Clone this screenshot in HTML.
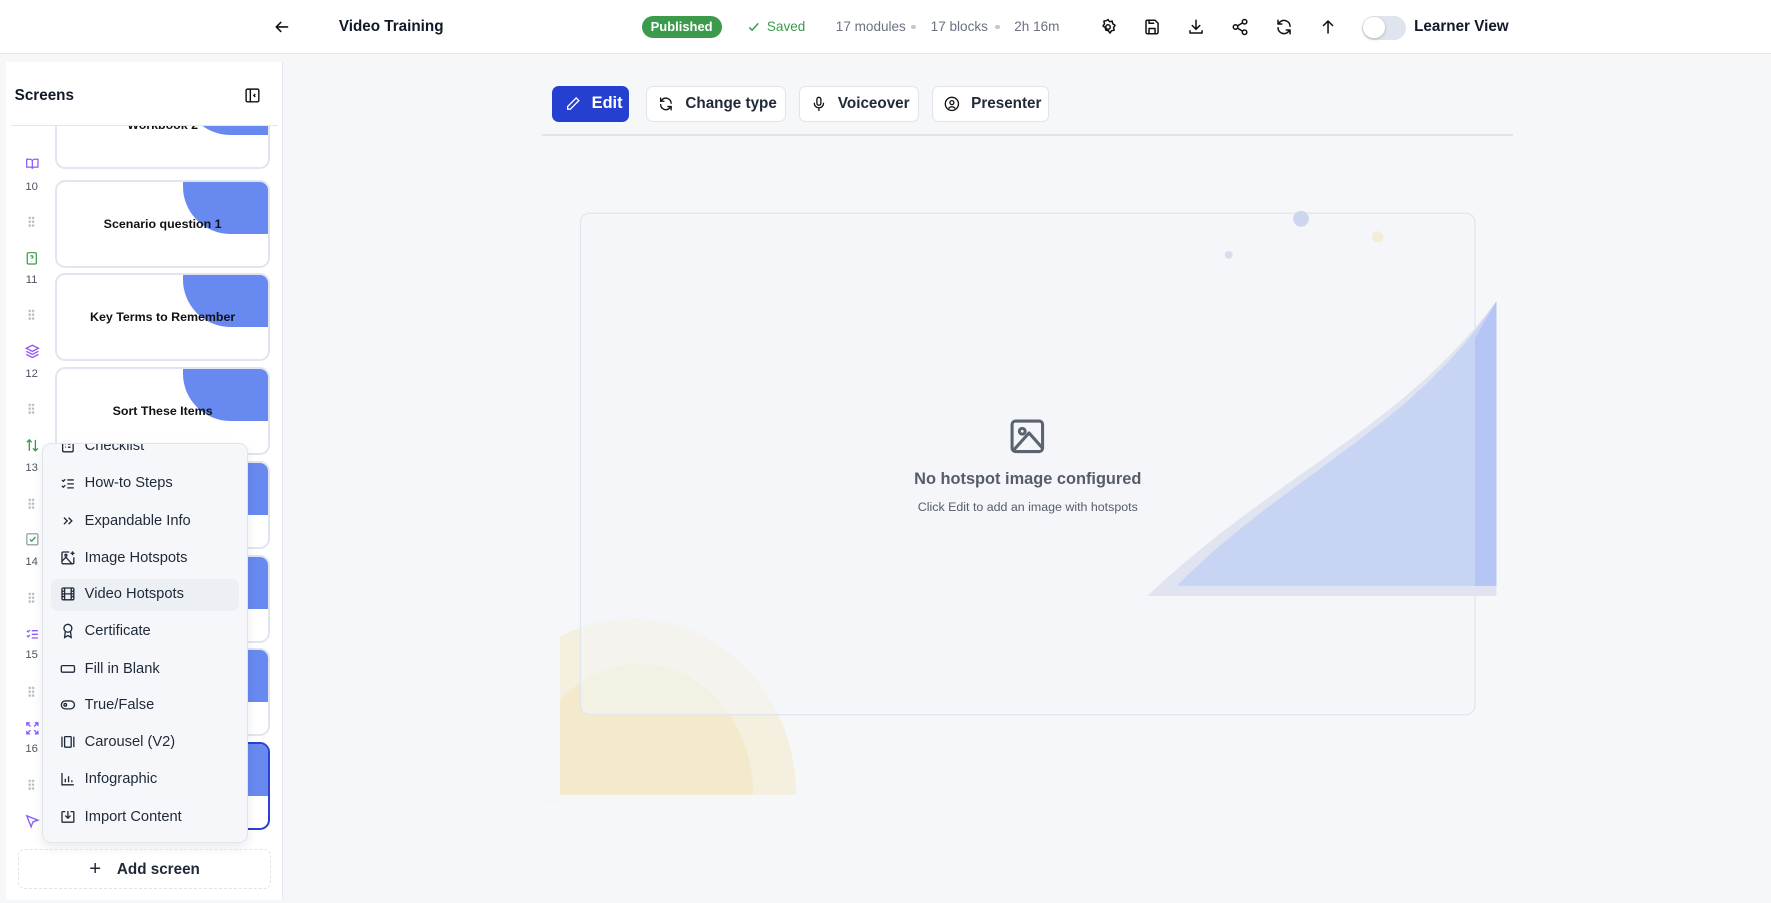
<!DOCTYPE html>
<html><head><meta charset="utf-8"><style>
*{box-sizing:border-box;margin:0;padding:0}
html,body{width:1771px;height:903px;overflow:hidden;background:#f6f7f9}
#w{zoom:1.12946;width:1568px;height:799px;overflow:hidden;position:relative;font-family:"Liberation Sans",sans-serif;color:#111827;background:#f6f7f9}
.a{position:absolute}
svg{display:block}
.top{left:0;top:0;width:1568px;height:48px;background:#fff;border-bottom:1px solid #e3e6ec}
.meta{font-size:12px;color:#6b7280;top:17px}
.dot{width:4px;height:4px;border-radius:2px;background:#c4c8d0;top:22px}
.ic{top:16px}
.btn{top:76px;height:32px;border:1px solid #e1e5eb;border-radius:6px;background:#fff;font-size:13.5px;font-weight:bold;display:flex;align-items:center;gap:10px;padding-left:10px;color:#1f2937}
.card{left:49px;width:190px;height:78px;background:#fff;border:2px solid #e0e5ef;border-radius:9px;overflow:hidden}
.card .bl{position:absolute;right:0;top:0;width:75px;height:46px;background:#6889f0;border-bottom-left-radius:42px}
.card .t{position:absolute;left:0;right:0;top:31px;text-align:center;font-size:11px;font-weight:bold;color:#111}
.num{left:18px;width:20px;text-align:center;font-size:10px;color:#4b5563}
.hd{left:25px;width:6px;height:10px;background:radial-gradient(circle,#b8bec8 1px,transparent 1.3px) 0 0/3px 3.4px}
.mi{left:53px;font-size:13px;color:#1f2937;display:flex;align-items:center;gap:8px;height:20px}
</style></head><body><div id="w">
<div class="a top"></div>
<svg class="a" style="left:243px;top:17px" width="14" height="14" viewBox="0 0 14 14" fill="none" stroke="#111" stroke-width="1.4" stroke-linecap="round" stroke-linejoin="round"><path d="M12 7H2M6 3L2 7l4 4"/></svg>
<div class="a" style="left:300px;top:16px;font-size:13.5px;font-weight:bold">Video Training</div>
<div class="a" style="left:568px;top:14px;width:71px;height:20px;border-radius:10px;background:#3b9a4c;color:#fff;font-size:11.5px;font-weight:bold;text-align:center;line-height:20px">Published</div>
<svg class="a" style="left:661px;top:18px" width="12" height="12" viewBox="0 0 12 12" fill="none" stroke="#3b9a4c" stroke-width="1.3"><path d="M2 6.5l2.5 2.5L10 3"/></svg>
<div class="a meta" style="left:679px;color:#3b9a4c">Saved</div>
<div class="a meta" style="left:740px">17 modules</div>
<div class="a dot" style="left:807px"></div>
<div class="a meta" style="left:824px">17 blocks</div>
<div class="a dot" style="left:881px"></div>
<div class="a meta" style="left:898px">2h 16m</div>
<svg class="a ic" style="left:973px" width="16" height="16" viewBox="0 0 24 24" fill="none" stroke="#111" stroke-width="2"><circle cx="12" cy="12" r="3"/><path d="M12 2l2 3 3.5-.8.8 3.5 3 2-2 3 .8 3.5-3.5.8-2 3-2-3-3.5-.8-.8-3.5-3-2 2-3-.8-3.5 3.5-.8z" stroke-linejoin="round"/></svg>
<svg class="a ic" style="left:1012px" width="16" height="16" viewBox="0 0 24 24" fill="none" stroke="#111" stroke-width="2" stroke-linejoin="round"><path d="M5 3h11l4 4v12a2 2 0 0 1-2 2H6a2 2 0 0 1-2-2V5a2 2 0 0 1 1-2z"/><path d="M8 21v-7h8v7M8 3v4h7"/></svg>
<svg class="a ic" style="left:1051px" width="16" height="16" viewBox="0 0 24 24" fill="none" stroke="#111" stroke-width="2" stroke-linecap="round" stroke-linejoin="round"><path d="M12 3v12M7 10l5 5 5-5M4 17v3h16v-3"/></svg>
<svg class="a ic" style="left:1090px" width="16" height="16" viewBox="0 0 24 24" fill="none" stroke="#111" stroke-width="2"><circle cx="18" cy="5" r="3"/><circle cx="6" cy="12" r="3"/><circle cx="18" cy="19" r="3"/><path d="M8.6 13.5l6.8 4M15.4 6.5l-6.8 4"/></svg>
<svg class="a ic" style="left:1129px" width="16" height="16" viewBox="0 0 24 24" fill="none" stroke="#111" stroke-width="2" stroke-linecap="round" stroke-linejoin="round"><path d="M20 11A8 8 0 0 0 6 6l-2 2M4 3v5h5M4 13a8 8 0 0 0 14 5l2-2M20 21v-5h-5"/></svg>
<svg class="a ic" style="left:1168px" width="16" height="16" viewBox="0 0 24 24" fill="none" stroke="#111" stroke-width="2" stroke-linecap="round" stroke-linejoin="round"><path d="M12 20V4M6 10l6-6 6 6"/></svg>
<div class="a" style="left:1206px;top:14px;width:39px;height:21px;border-radius:11px;background:#dfe4ee"></div>
<div class="a" style="left:1207px;top:15px;width:19px;height:19px;border-radius:10px;background:#fff;box-shadow:0 1px 3px rgba(0,0,0,.2)"></div>
<div class="a" style="left:1252px;top:16px;font-size:13.5px;font-weight:bold">Learner View</div>

<!-- sidebar -->
<div class="a" style="left:5px;top:55px;width:246px;height:742px;background:#fff;border-right:1px solid #e6e9ef"></div>
<div class="a" style="left:13px;top:77px;font-size:13.5px;font-weight:bold">Screens</div>
<svg class="a" style="left:216px;top:77px" width="15" height="15" viewBox="0 0 24 24" fill="none" stroke="#111" stroke-width="2"><rect x="3" y="3" width="18" height="18" rx="2"/><path d="M9 3v18M16 10l-2 2 2 2"/></svg>
<div class="a" style="left:10px;top:111px;width:236px;height:1px;background:#e3e6ec"></div>
<div class="a" style="left:5px;top:112px;width:246px;height:640px;overflow:hidden">
 <div class="a card" style="left:44px;top:-40px"><div class="bl"></div><div class="t">Workbook 2</div></div>
 <div class="a card" style="left:44px;top:47px"><div class="bl"></div><div class="t">Scenario question 1</div></div>
 <div class="a card" style="left:44px;top:130px"><div class="bl"></div><div class="t">Key Terms to Remember</div></div>
 <div class="a card" style="left:44px;top:213px"><div class="bl"></div><div class="t">Sort These Items</div></div>
 <div class="a card" style="left:44px;top:296px"><div class="bl"></div></div>
 <div class="a card" style="left:44px;top:379px"><div class="bl"></div></div>
 <div class="a card" style="left:44px;top:462px"><div class="bl"></div></div>
 <div class="a card" style="left:44px;top:545px;border-color:#2c3fd6"><div class="bl"></div></div>
</div>
<!-- left column -->
<svg class="a" style="left:22px;top:139px" width="13" height="12" viewBox="0 0 24 24" fill="none" stroke="#8b5cf6" stroke-width="2.2"><path d="M2 4h6a4 4 0 0 1 4 4v13a3 3 0 0 0-3-3H2zM22 4h-6a4 4 0 0 0-4 4v13a3 3 0 0 1 3-3h7z"/></svg>
<svg class="a" style="left:22px;top:222px" width="12" height="13" viewBox="0 0 24 24" fill="none" stroke="#3b9a4c" stroke-width="2.2"><rect x="4" y="2" width="16" height="20" rx="2"/><path d="M10 9a2 2 0 1 1 3 2c-1 .5-1 1-1 2M12 17v.5"/></svg>
<svg class="a" style="left:22px;top:305px" width="13" height="13" viewBox="0 0 24 24" fill="none" stroke="#8b5cf6" stroke-width="2.2"><path d="M12 2l10 5-10 5L2 7zM2 12l10 5 10-5M2 17l10 5 10-5"/></svg>
<svg class="a" style="left:22px;top:388px" width="13" height="13" viewBox="0 0 24 24" fill="none" stroke="#3b9a4c" stroke-width="2.2"><path d="M7 21V3M3 7l4-4 4 4M17 3v18M13 17l4 4 4-4"/></svg>
<svg class="a" style="left:22px;top:471px" width="13" height="13" viewBox="0 0 24 24" fill="none" stroke="#3b9a4c" stroke-width="2.2"><rect x="3" y="3" width="18" height="18" rx="2" stroke="#9ca3af"/><path d="M8 12l3 3 6-7"/></svg>
<svg class="a" style="left:22px;top:555px" width="13" height="13" viewBox="0 0 24 24" fill="none" stroke="#8b5cf6" stroke-width="2.2"><path d="M3 6l2 2 3-3M3 14l2 2 3-3M11 6h10M11 12h10M11 18h10"/></svg>
<svg class="a" style="left:22px;top:638px" width="13" height="13" viewBox="0 0 24 24" fill="none" stroke="#8b5cf6" stroke-width="2.2"><path d="M3 8V3h5M21 8V3h-5M3 16v5h5M21 16v5h-5M3 3l6 6M21 3l-6 6M3 21l6-6M21 21l-6-6"/></svg>
<svg class="a" style="left:22px;top:721px" width="13" height="13" viewBox="0 0 24 24" fill="none" stroke="#8b5cf6" stroke-width="2.2"><path d="M3 3l7 18 3-8 8-3z"/></svg>
<div class="a num" style="top:160px">10</div><div class="a num" style="top:243px">11</div><div class="a num" style="top:326px">12</div><div class="a num" style="top:409px">13</div><div class="a num" style="top:492px">14</div><div class="a num" style="top:575px">15</div><div class="a num" style="top:658px">16</div>
<div class="a hd" style="top:191px"></div><div class="a hd" style="top:274px"></div><div class="a hd" style="top:357px"></div><div class="a hd" style="top:441px"></div><div class="a hd" style="top:524px"></div><div class="a hd" style="top:607px"></div><div class="a hd" style="top:690px"></div>

<!-- dropdown -->
<div class="a" style="left:37px;top:392px;width:183px;height:354px;background:#f5f7fa;border:1px solid #e1e5ec;border-radius:8px;box-shadow:0 4px 10px rgba(0,0,0,.08);overflow:hidden">
 <div class="a" style="left:7px;top:120px;width:167px;height:28px;border-radius:6px;background:#eceff4"></div>
</div>
<div class="a" style="left:37px;top:393px;width:183px;height:353px;overflow:hidden">
<div class="a" style="left:0;top:-1px;width:183px;height:354px">
<div class="a mi" style="left:16px;top:-7px"><svg width="14" height="14" viewBox="0 0 24 24" fill="none" stroke="#1f2937" stroke-width="2"><rect x="4" y="3" width="16" height="18" rx="2"/><path d="M8 9h1M12 9h4M8 14h1M12 14h4"/></svg>Checklist</div>
<div class="a mi" style="left:16px;top:26px"><svg width="14" height="14" viewBox="0 0 24 24" fill="none" stroke="#1f2937" stroke-width="2"><path d="M3 6l2 2 3-3M3 15l2 2 3-3M11 6h10M11 12h10M11 18h10"/></svg>How-to Steps</div>
<div class="a mi" style="left:16px;top:59px"><svg width="14" height="14" viewBox="0 0 24 24" fill="none" stroke="#1f2937" stroke-width="2"><path d="M6 7l5 5-5 5M13 7l5 5-5 5"/></svg>Expandable Info</div>
<div class="a mi" style="left:16px;top:92px"><svg width="14" height="14" viewBox="0 0 24 24" fill="none" stroke="#1f2937" stroke-width="2"><path d="M14 3H5a2 2 0 0 0-2 2v14a2 2 0 0 0 2 2h14a2 2 0 0 0 2-2v-8M3 17l6-6 9 10M19 2v6M16 5h6"/><circle cx="9" cy="8" r="1.5"/></svg>Image Hotspots</div>
<div class="a mi" style="left:16px;top:124px"><svg width="14" height="14" viewBox="0 0 24 24" fill="none" stroke="#1f2937" stroke-width="2"><rect x="3" y="3" width="18" height="18" rx="2"/><path d="M7 3v18M17 3v18M3 8h4M3 12h18M3 16h4M17 8h4M17 16h4"/></svg>Video Hotspots</div>
<div class="a mi" style="left:16px;top:157px"><svg width="14" height="14" viewBox="0 0 24 24" fill="none" stroke="#1f2937" stroke-width="2"><circle cx="12" cy="8" r="6"/><path d="M8 13l-1 9 5-3 5 3-1-9"/></svg>Certificate</div>
<div class="a mi" style="left:16px;top:190px"><svg width="14" height="14" viewBox="0 0 24 24" fill="none" stroke="#1f2937" stroke-width="2"><rect x="2" y="7" width="20" height="10" rx="2"/><path d="M7 12h.01M12 12h.01M17 12h.01"/></svg>Fill in Blank</div>
<div class="a mi" style="left:16px;top:222px"><svg width="14" height="14" viewBox="0 0 24 24" fill="none" stroke="#1f2937" stroke-width="2"><rect x="2" y="6" width="20" height="12" rx="6"/><circle cx="8" cy="12" r="2"/></svg>True/False</div>
<div class="a mi" style="left:16px;top:255px"><svg width="14" height="14" viewBox="0 0 24 24" fill="none" stroke="#1f2937" stroke-width="2"><rect x="7" y="4" width="10" height="16" rx="1"/><path d="M3 4v16M21 4v16"/></svg>Carousel (V2)</div>
<div class="a mi" style="left:16px;top:288px"><svg width="14" height="14" viewBox="0 0 24 24" fill="none" stroke="#1f2937" stroke-width="2"><path d="M3 3v18h18M8 17v-5M13 17V8M18 17v-3"/></svg>Infographic</div>
<div class="a mi" style="left:16px;top:321px"><svg width="14" height="14" viewBox="0 0 24 24" fill="none" stroke="#1f2937" stroke-width="2"><path d="M8 4H4a1 1 0 0 0-1 1v14a1 1 0 0 0 1 1h16a1 1 0 0 0 1-1V5a1 1 0 0 0-1-1h-4M12 3v11M8 10l4 4 4-4"/></svg>Import Content</div>
</div></div>
<div class="a" style="left:16px;top:752px;width:224px;height:35px;border:1px dashed #dfe3ea;border-radius:6px;display:flex;align-items:center;justify-content:center;gap:14px;font-size:13.5px;font-weight:bold;color:#1f2937"><span style="font-size:18px;font-weight:normal">+</span>Add screen</div>

<!-- main -->
<div class="a btn" style="left:489px;width:68px;background:#2540d0;border-color:#2540d0;color:#fff;font-size:14.5px"><svg width="14" height="14" viewBox="0 0 24 24" fill="none" stroke="#fff" stroke-width="2"><path d="M17 3l4 4L8 20H4v-4z"/></svg>Edit</div>
<div class="a btn" style="left:572px;width:124px"><svg width="14" height="14" viewBox="0 0 24 24" fill="none" stroke="#111" stroke-width="2" stroke-linecap="round"><path d="M20 11A8 8 0 0 0 6 6l-2 2M4 3v5h5M4 13a8 8 0 0 0 14 5l2-2M20 21v-5h-5"/></svg>Change type</div>
<div class="a btn" style="left:707px;width:107px"><svg width="14" height="14" viewBox="0 0 24 24" fill="none" stroke="#111" stroke-width="2" stroke-linecap="round"><rect x="9" y="2" width="6" height="12" rx="3"/><path d="M5 11a7 7 0 0 0 14 0M12 18v4"/></svg>Voiceover</div>
<div class="a btn" style="left:825px;width:104px"><svg width="14" height="14" viewBox="0 0 24 24" fill="none" stroke="#111" stroke-width="2"><circle cx="12" cy="12" r="10"/><circle cx="12" cy="10" r="3"/><path d="M7 19a6 6 0 0 1 10 0"/></svg>Presenter</div>
<div class="a" style="left:480px;top:119px;width:860px;height:1px;background:#e1e5eb"></div>

<svg class="a" style="left:480px;top:180px" width="860" height="530">
 <ellipse cx="80" cy="524" rx="145" ry="156" fill="#f5efdf"/>
 <ellipse cx="86" cy="524" rx="101" ry="116" fill="#f4e9cb"/>
 <rect x="0" y="0" width="16" height="530" fill="#f6f7f9"/>
 <rect x="16" y="524" width="300" height="10" fill="#f6f7f9"/>
 <rect x="34" y="9" width="792" height="444" rx="8" fill="#f3f6f9" fill-opacity=".55" stroke="#dfe3ec"/>
 <path d="M536 348 C650 240 760 200 845 87 L845 348Z" fill="#dfe4f0"/>
 <path d="M562 339 C660 240 770 200 845 87 L845 339Z" fill="#c7d4f4"/>
 <path d="M826 120 L845 87 L845 339 L826 339Z" fill="#b6c6f4"/>
 <circle cx="672" cy="14" r="7" fill="#ccd6ee"/>
 <circle cx="608" cy="46" r="3.5" fill="#d7ddea"/>
 <circle cx="740" cy="30" r="5" fill="#f5ecd6"/>
</svg>
<svg class="a" style="left:892px;top:368px" width="36" height="36" viewBox="0 0 24 24" fill="none" stroke="#5b6270" stroke-width="1.8" stroke-linejoin="round"><rect x="3" y="3" width="18" height="18" rx="2"/><circle cx="9" cy="9" r="1.7"/><path d="M4 20l9-10 8 9"/></svg>
<div class="a" style="left:700px;top:416px;width:420px;text-align:center;font-size:14.5px;font-weight:bold;color:#555d6b">No hotspot image configured</div>
<div class="a" style="left:700px;top:443px;width:420px;text-align:center;font-size:11px;color:#555d6b">Click Edit to add an image with hotspots</div>
</div></body></html>
